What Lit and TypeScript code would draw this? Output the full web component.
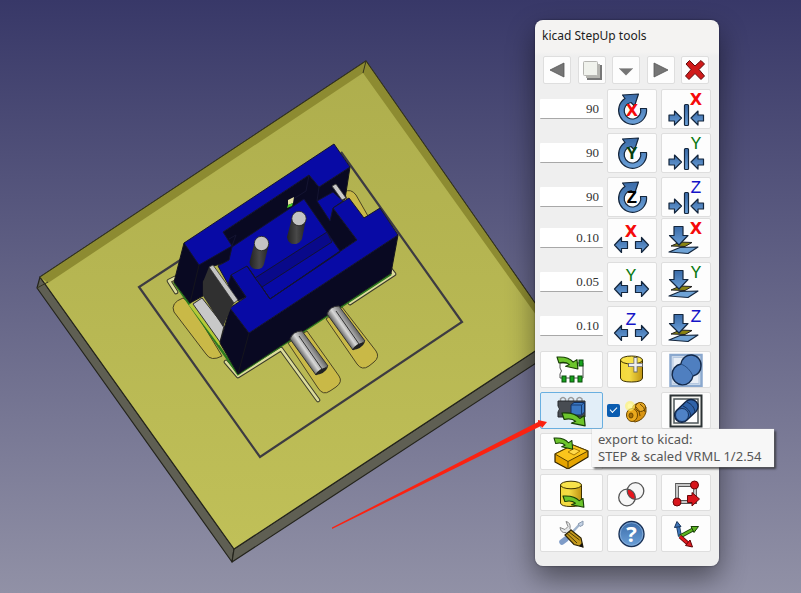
import { LitElement, html, svg, css, type SVGTemplateResult } from "lit";
import { customElement, state } from "lit/decorators.js";

type Axis = "X" | "Y" | "Z";
const AXES: Axis[] = ["X", "Y", "Z"];

const letter = (a: Axis, x: number, y: number, dark = false) => svg`
  <text class="letter ${a.toLowerCase()} ${dark ? "dark" : ""}" x=${x} y=${y} text-anchor="middle">${a}</text>`;

const greenArrow = (t: string) => svg`
  <path transform=${t} d="M0 0Q12-1 17 6L21 3L22 14L9 11L13 9Q9 5 2 7Z"
    fill="#6cc52c" stroke="#173f06" stroke-width="1.2" stroke-linejoin="round"/>`;

const rotateIcon = (a: Axis) => svg`
  <path class="steel" d="M39.500 19.500A14 14 0 1 1 18 9.500L15.500 6L31.500 5L27.500 17L24 13.500A8.300 8.300 0 1 0 33.500 19.500Z"/>
  ${letter(a, 25, a === "X" ? 27 : 26, true)}`;

const mirrorIcon = (a: Axis) => svg`
  <path class="steel" d="M8 26h5.500v-4l7 7l-7 7v-4H8Z"/>
  <rect class="steel" x="23.500" y="15.500" width="4" height="21" rx="1"/>
  <path class="steel" d="M42.500 26h-5.500v-4l-7 7l7 7v-4h5.500Z"/>
  ${letter(a, 35, 16)}`;

const moveIcon = (a: Axis) => svg`
  <path class="steel" d="M7.500 27l7-7.500v4h6v7h-6v4Z"/>
  <path class="steel" d="M41.500 27l-7-7.500v4h-6v7h6v4Z"/>
  ${letter(a, 24, 19)}`;

const dropIcon = (a: Axis) => svg`
  <path d="M10 28L19 24L31 24.500L24 28.500Z" fill="#8a8412" stroke="#222" stroke-width="1"/>
  <path class="steel light" d="M8 34L19 29.500L37 29L27 35.500Z"/>
  <path class="steel" d="M13 8.500h9v9h5L18 27L8.500 17.500H13Z"/>
  ${letter(a, 35, 16)}`;

const icons: Record<string, SVGTemplateResult> = {
  load: svg`
    <path d="M20 12H43V27H20V23Q23 20 20 17Z" fill="#fff" stroke="#555" stroke-width="1"/>
    <g fill="#16a31c" stroke="#0b4d0d"><rect x="39" y="9" width="4" height="6"/>
    <rect x="22" y="25" width="4" height="6"/><rect x="30" y="25" width="4" height="6"/><rect x="38" y="25" width="4" height="6"/></g>
    ${greenArrow("translate(17 6) scale(.95 .85)")}`,
  cylinder: svg`
    <path d="M13.500 9V27Q14 31 24.500 31T35.500 27V9Z" fill="url(#gold)" stroke="#3b3000"/>
    <ellipse cx="24.500" cy="9" rx="11" ry="4" fill="#f8e24a" stroke="#3b3000"/>
    <path d="M28.500 6V21.500M21 14H36" stroke="#666" stroke-width="4"/><path d="M28.500 7V20.500M22 14H35" stroke="#eee" stroke-width="2.400"/>`,
  union: svg`
    <rect x="9.500" y="4" width="31" height="31" fill="#dce6f2" stroke="#8aa8ce" stroke-width="2.500"/>
    <rect x="12" y="6.500" width="26" height="26" fill="#e8eef6" stroke="#b5c8e0"/>
    <path d="M20 13A10 10 0 0 1 40 15A10 10 0 0 1 32 25A10.500 10.500 0 1 1 20 13Z" fill="#4f7fc0" stroke="#13294a" stroke-width="1.400"/>
    <path d="M20 13Q28 16 32 25" fill="none" stroke="#2a5186"/>`,
  exportKicad: svg`
    <g fill="none" stroke="#9a9a9a" stroke-width="1.500"><path d="M20.500 11V7q2.500-3 5 0v4M28.500 11V7q2.500-3 5 0v4M37 11V7q2.500-3 5 0v4"/></g>
    <path d="M18 9H45V25H18V20Q21 17 18 14Z" fill="#484c52" stroke="#25272a"/>
    <path d="M31 13L34 10.500H44.500V20L41.500 23H31Z" fill="#3a77c2" stroke="#122f5c"/><path d="M31 13H41.500V23M41.500 13L44.500 10.500" fill="none" stroke="#183c70"/>
    ${greenArrow("translate(22 21) scale(1.05 .92)")}`,
  fuse: svg`
    <rect x="9.500" y="3.500" width="31" height="31" fill="#f4f4f0" stroke="#2c3335" stroke-width="2"/>
    <rect x="13" y="7" width="24" height="24" fill="#fff" stroke="#4c5558" stroke-width="1.500"/>
    <path d="M15.500 18.500L25 9.500A7 7 0 0 1 35 19.500L26 28A7 7 0 0 1 15.500 18.500Z" fill="#2f62a8" stroke="#0f2344" stroke-width="1.400"/>
    <circle cx="21" cy="23" r="6.500" fill="#4f82c6" stroke="#16325c"/><path d="M22 14Q29 17 30 24M26 10Q33 13 34 20" fill="none" stroke="#16325c"/>`,
  importBox: svg`
    <path d="M15 21L33 12L48 18V24L28 36L15 29Z" fill="#e5a400" stroke="#2f2200" stroke-width="1.200" stroke-linejoin="round"/>
    <path d="M15 21L33 12L48 18L28 28.500Z" fill="#fac51c" stroke="#5a4100"/><path d="M28 28.500V36" stroke="#5a4100"/>
    <path d="M28 19L34 15.500L40 18L34 22Z" fill="#ffd94a" stroke="#a87800"/>
    ${greenArrow("translate(14 5) scale(.85 .8)")}`,
  exportCylinder: svg`
    <path d="M20.500 11V29Q21 32.500 31 32.500T41.500 29V11Z" fill="url(#gold)" stroke="#3b3000"/>
    <ellipse cx="31" cy="11" rx="10.500" ry="3.800" fill="#f8e24a" stroke="#3b3000"/>
    ${greenArrow("translate(23 22) scale(.95 .8)")}`,
  intersect: svg`
    <circle cx="20" cy="23.500" r="8.300" fill="#f6f6f6"/><circle cx="28.500" cy="17" r="8.300" fill="#f6f6f6"/>
    <path d="M20.300 15.300A8.300 8.300 0 0 1 28.200 25.300A8.300 8.300 0 0 1 20.300 15.300Z" fill="#e8141c"/>
    <g fill="none" stroke="#555" stroke-width="1.300"><circle cx="20" cy="23.500" r="8.300"/><circle cx="28.500" cy="17" r="8.300"/></g>`,
  path: svg`
    <path d="M16 28V11H34V28H16" fill="none" stroke="#555" stroke-width="3.800"/><path d="M16 28V11H34V28H16" fill="none" stroke="#c6c6c6" stroke-width="2"/>
    <g fill="#d8161c" stroke="#6b0608"><circle cx="33.500" cy="11" r="4"/><circle cx="16" cy="28" r="4"/>
    <path d="M26.500 21.500H31V18.500L38.500 25L31 32V28.500H26.500Z"/></g>`,
  tools: svg`
    <path d="M41 8L24 26" stroke="#9fb3cc" stroke-width="2.500"/><path d="M43 6l-5 3l2 2.500l3-1.500Z" fill="#c4d2e4" stroke="#8b9bb0"/>
    <path d="M22 27L26 24" stroke="#7f9cc8" stroke-width="5.500" stroke-linecap="round"/>
    <path d="M26 6.500q5 1 4 7l10 11l-4 4l-10-11q-5 1-6-5l5 2l3-3Z" fill="#e5e7e8" stroke="#888"/>
    <path d="M25 20L31 15L41 23L43 32L34 29.500Z" fill="#c59a1c" stroke="#2b2205" stroke-width="1.200"/><path d="M27 18.500L37 28M29 17L39.500 25" stroke="#4a3904"/><path d="M39 31l4 1.500l-1-4.500Z" fill="#111"/>`,
  help: svg`
    <circle cx="24.500" cy="19" r="12.500" fill="url(#steel)" stroke="#1a3257" stroke-width="1.400"/><circle cx="24.500" cy="19" r="11.300" fill="none" stroke="#8db2dd" stroke-width=".8"/>
    <text class="question" x="24.500" y="27" text-anchor="middle">?</text>`,
  axes: svg`
    <path d="M19 21.500L17 11" stroke="#153259" stroke-width="4"/><path d="M19 21.500L17 11" stroke="#3d74b8" stroke-width="2.400"/>
    <path d="M16 6.500L20 11.500L13.500 12.500Z" fill="#3d74b8" stroke="#153259"/>
    <path d="M19 21.500L32 14.500" stroke="#173f06" stroke-width="4"/><path d="M19 21.500L32 14.500" stroke="#5cb320" stroke-width="2.400"/>
    <path d="M37.500 11.500L30 11.500L33 17.500Z" fill="#5cb320" stroke="#173f06"/>
    <path d="M19 21.500L27.500 29" stroke="#5a0507" stroke-width="4"/><path d="M19 21.500L27.500 29" stroke="#e0181e" stroke-width="2.400"/>
    <path d="M31.500 32L24.500 30.500L29 25Z" fill="#e0181e" stroke="#5a0507"/>`,
};

const gear = svg`
  <g stroke="#6b4700" stroke-width="1"><path d="M22 19q6-9 12-8l5 4v5q-2 8-11 10q-6-2-7-6Z" fill="#d99411"/>
  <ellipse cx="33.500" cy="15" rx="5" ry="4.500" fill="#e9ab26"/><ellipse cx="25" cy="23" rx="5.500" ry="6.500" fill="#eaa91c"/>
  <ellipse cx="24" cy="23.500" rx="2" ry="2.500" fill="#a87108"/><path d="M29 15q4 3 4 9M33 12q5 3 5 8" fill="none"/></g>
  <circle cx="23" cy="14" r="5" fill="#fff36b" opacity=".65"/><circle cx="23" cy="14" r="2.500" fill="#fff9a8"/>`;

const toolbar: { label: string; art: SVGTemplateResult }[] = [
  { label: "Previous", art: svg`<path d="M7 14L21 7V21Z" fill="#757575" stroke="#555" stroke-width=".8"/>` },
  { label: "Window", art: svg`<rect x="9" y="9" width="15" height="15" fill="#777"/><rect x="8" y="8" width="14" height="14" fill="#b5b5b0"/><rect x="5.500" y="5.500" width="14" height="14" rx="1" fill="#f0f2ec" stroke="#b6b6b2"/>` },
  { label: "Collapse", art: svg`<path d="M7 12.500H21L14 19.500Z" fill="#757575"/><path d="M7 12.500H21" stroke="#aaa"/>` },
  { label: "Next", art: svg`<path d="M21 14L7 7V21Z" fill="#757575" stroke="#555" stroke-width=".8"/>` },
  { label: "Close", art: svg`<path d="M5 8L8.500 4.500L14 10L20 4.500L23.500 8L18 13.500L23.500 20L20 23.500L14 17.500L8 23.500L4.500 20L10 13.500Z" fill="#d01a1a" stroke="#5f0a0a" stroke-width="1"/>` },
];

const scene = svg`
  <defs>
    <linearGradient id="sky" x1="0" y1="0" x2="0" y2="1"><stop offset="0" stop-color="#383868"/><stop offset="1" stop-color="#9191a6"/></linearGradient>
    <linearGradient id="board" x1="0" y1="0" x2="0" y2="1"><stop offset="0" stop-color="#aeae4d"/><stop offset="1" stop-color="#c0c058"/></linearGradient>
    <linearGradient id="lead" gradientUnits="userSpaceOnUse" x1="302" y1="357" x2="315" y2="348"><stop offset="0" stop-color="#555"/><stop offset=".4" stop-color="#d8d8d8"/><stop offset="1" stop-color="#666"/></linearGradient>
    <linearGradient id="pin" x1="0" x2="1" y1="0" y2="0"><stop offset="0" stop-color="#222"/><stop offset=".5" stop-color="#484848"/><stop offset="1" stop-color="#242424"/></linearGradient>
    <linearGradient id="gold"><stop offset="0" stop-color="#f2d93a"/><stop offset=".4" stop-color="#f4dc45"/><stop offset="1" stop-color="#bf9312"/></linearGradient>
    <linearGradient id="steel" x1="0" y1="0" x2="0" y2="1"><stop offset="0" stop-color="#3a6ba8"/><stop offset="1" stop-color="#6ba0d8"/></linearGradient>
  </defs>
  <rect width="801" height="593" fill="url(#sky)"/>
  <g stroke="#24241c" stroke-width="1.200" stroke-linejoin="round">
    <path d="M40 277L37 288L232 562L234 549Z" fill="#5f5f53"/>
    <path d="M234 549L232 562L556 350L558 336Z" fill="#5f5f53"/>
    <path d="M40 277L366 61L558 336L234 549Z" fill="url(#board)"/>
  </g>
  <path d="M40 277L366 61L558 336L554 340L363 73L48 283Z" fill="#8d8b31"/>
  <path d="M40 277L366 61L558 336M366 61L363 73M37 288L48 282" fill="none" stroke="#35351e"/>
  <path d="M341 152L462 322L260 457L139 287L185 257" fill="none" stroke="#3d3b42" stroke-width="2.200"/>
  <g fill="#c9b947" stroke="#4a4423">
    <path d="M183 298Q170 303 174 312L206 354Q211 362 222 356L190 303Z"/>
    <path d="M288 343L318 388Q323 396 330 391L336 387Q343 382 339 376L307 331Z"/>
    <path d="M326 319L357 364Q362 371 369 366L374 362Q380 357 376 351L342 307Z"/>
    <path d="M344 192Q351 188 356 195L368 216L362 219L347 199Z"/>
  </g>
  <g fill="none" stroke-linecap="round" stroke-linejoin="round">
    <path d="M175 278L169 281L176 292M226 362L238 376L281 349L318 400M350 303L394 274L390 269" stroke="#3a3a2a" stroke-width="4.600"/>
    <path d="M175 278L169 281L176 292M226 362L238 376L281 349L318 400M350 303L394 274L390 269" stroke="#dcdc9b" stroke-width="2.600"/>
  </g>
  <path d="M174 282L238 374L391 274" fill="none" stroke="#2c7a1f" stroke-width="2.400"/>
  <path d="M190 304L220 344" stroke="#b5cb38" stroke-width="3"/>
  <path d="M193 304L202 298L224 326L220 342Z" fill="#c8c8c8" stroke="#333"/>
  <g fill="#090922" stroke="#15151d" stroke-linejoin="round">
    <path d="M184 243L223 232L309 175L319 187L350 167L345 199L333 208L357 240L270 299L229 262L213 266L203 282V296L190 303L174 282Z"/>
    <path d="M230 308L249 333L398 235L391 273L238 374L220 343Z"/>
    <path d="M249 333L238 374M199 265L190 303"/>
  </g>
  <g fill="#080aa5" stroke="#141432" stroke-linejoin="round">
    <path d="M304 199L340 251L270 299L247 266L228 284L218 266L229 260L232 247Z"/>
    <path d="M317 201L333 192L343 201L333 208L330 221Z"/>
    <path d="M334 144L350 167L319 187L309 175L223 232L232 246L199 265L184 243Z"/>
    <path d="M333 208L349 198L364 218L380 208L398 235L249 333L230 308L246 297L231 275L247 266L270 299L357 240Z"/>
    <path d="M327 232L332 242L262 287L255 278Z" fill="#09098a"/>
    <path d="M261 286L270 299L340 252M255 278L247 266" fill="none"/>
    <path d="M231 275L246 297L238 301L228 285Z" fill="#090922"/>
    <path d="M309 175L306 191L290 201M232 246L236 235L229 239M319 187L317 201" fill="none"/>
  </g>
  <path d="M209 267L203 282V296L223 327L231 308L235 302Z" fill="#303030"/>
  <path d="M209 267L213 265L238 300L234 303Z" fill="#c4c4c4" stroke="#333" stroke-width=".8"/>
  <path d="M332 187L343 201V196L335 184Z" fill="#383838"/>
  <path d="M332 186L336 184L346 198L342 200Z" fill="#cacaca" stroke="#333" stroke-width=".8"/>
  <path d="M288 200L294 197L293 203L288 205Z" fill="#e5e0a5"/><path d="M288 205L293 203L292 206L287 208Z" fill="#45cb25"/>
  <path d="M254.500 243L249.500 262Q250 270 259 269Q263 268 264 264L269 244Z" fill="url(#pin)"/>
  <path d="M292 218L287 237Q288 245 296 244Q300 243 302 239L306 219Z" fill="url(#pin)"/>
  <g fill="#c3c3c3" stroke="#222" stroke-width=".8"><circle cx="261.500" cy="243.500" r="7.200"/><circle cx="299" cy="218.500" r="7.200"/></g>
  <path d="M290 339Q293 331 302 331L328 366L316 375Z" fill="url(#lead)" stroke="#333"/>
  <path d="M315 375Q319 368 328 367Q325 374 315 375Z" fill="#222"/>
  <path d="M299 336L322 369" stroke="#333"/>
  <g transform="translate(37 -25)"><path d="M290 339Q293 331 302 331L328 366L316 375Z" fill="url(#lead)" stroke="#333"/>
  <path d="M315 375Q319 368 328 367Q325 374 315 375Z" fill="#222"/><path d="M299 336L322 369" stroke="#333"/></g>`;

@customElement("app-root")
export class AppRoot extends LitElement {
  @state() private angles = ["90", "90", "90"];
  @state() private offsets = ["0.10", "0.05", "0.10"];

  static styles = css`
    :host {
      display: block;
      position: relative;
      min-height: 100vh;
      overflow: hidden;
      background: #707090;
      font-family: "Noto Sans", "Open Sans", sans-serif;
    }
    .layer { position: absolute; inset: 0; width: 100%; height: 100%; }
    .arrow { pointer-events: none; }
    .panel {
      position: absolute;
      top: 20px;
      right: 82px;
      width: 184px;
      box-sizing: border-box;
      padding: 0 8px 14px 5px;
      border-radius: 8px;
      background: linear-gradient(#f4f3f2 0 32px, #efefef 36px);
      box-shadow: 0 0 2px rgba(0, 0, 0, 0.5), 0 12px 28px rgba(0, 0, 0, 0.45);
    }
    h1 {
      margin: 0;
      padding: 0 2px;
      font-size: 12px;
      font-weight: 400;
      line-height: 32px;
      color: #1c1c1c;
    }
    .toolbar {
      display: flex;
      justify-content: space-between;
      padding: 4px 2px 5px 3px;
    }
    .grid {
      display: grid;
      grid-template-columns: 1fr 50px 50px;
      gap: 4px;
      grid-auto-rows: 40px;
      align-items: center;
      margin-bottom: 1px;
    }
    .actions { grid-auto-rows: 37px; margin: 5px 0 0; }
    button {
      display: block;
      box-sizing: border-box;
      width: 100%;
      height: 100%;
      padding: 0;
      border: 1px solid #dedede;
      border-radius: 2px;
      background: #fdfdfd;
    }
    .toolbar button { width: 28px; height: 28px; }
    button.hot { border-color: #69afe0; background: #e2eef8; }
    button svg, .option svg { display: block; width: 100%; height: 100%; }
    .value {
      box-sizing: border-box;
      width: 100%;
      height: 20px;
      padding: 0 4px;
      border: 0;
      border-bottom: 1px solid #a8a8a8;
      border-radius: 1px;
      background: #fff;
      color: #333;
      font: 13px "Liberation Serif", serif;
      text-align: right;
    }
    .cell { position: relative; height: 100%; }
    .option { position: relative; display: block; height: 100%; }
    .option input {
      position: absolute;
      left: 0;
      top: 12px;
      width: 13px;
      height: 13px;
      margin: 0;
      appearance: none;
      border-radius: 2px;
      background: #0a5cb0;
    }
    .option input:checked::before {
      content: "";
      position: absolute;
      left: 3px;
      top: 3px;
      width: 6px;
      height: 3px;
      border: solid #fff;
      border-width: 0 0 1px 1px;
      transform: rotate(-45deg);
    }
    .tip {
      position: absolute;
      z-index: 2;
      left: 52px;
      top: 100%;
      padding: 2px 12px 2px 6px;
      background: #f7f7f7;
      box-shadow: 0 0 1px #aaa, 2px 2px 2px rgba(40, 40, 40, 0.75);
      color: #565656;
      font-size: 13px;
      line-height: 17px;
      white-space: nowrap;
    }
    .steel { fill: url(#steel) #4a82bf; stroke: #14263d; stroke-width: 1.2; stroke-linejoin: round; }
    .light { fill: #6fa3d6; }
    .letter { font: 18px "Liberation Mono", monospace; }
    .x { fill: #f50a0a; font: bold 16px "DejaVu Sans", sans-serif; }
    .y { fill: #0b7a14; }
    .z { fill: #1414c8; }
    .dark.y { fill: #06420c; font-weight: bold; }
    .dark.z { fill: #000; font-weight: bold; }
    .question { fill: #fff; font: bold 22px "Open Sans", sans-serif; }
  `;

  private tile(label: string, art: unknown, box: string, cls = "") {
    return html`<button class=${cls} type="button" aria-label=${label}><svg viewBox=${box} aria-hidden="true">${art}</svg></button>`;
  }

  private field(label: string, value: string) {
    return html`<input class="value" type="text" aria-label=${label} .value=${value} />`;
  }

  render() {
    const std = "1 1 48 38";
    const wide = "1 1 61 35";
    const low = "1 1 48 35";
    return html`
      <svg class="layer" viewBox="0 0 801 593" preserveAspectRatio="xMidYMid slice" role="img" aria-label="3D view of connector on board">${scene}</svg>
      <section class="panel" aria-label="kicad StepUp tools">
        <h1>kicad StepUp tools</h1>
        <div class="toolbar">${toolbar.map((t) => this.tile(t.label, t.art, "1 1 26 26"))}</div>
        <div class="grid">
          ${AXES.map((a, i) => html`
            ${this.field(`Angle ${a}`, this.angles[i])}
            ${this.tile(`Rotate ${a}`, rotateIcon(a), std)}
            ${this.tile(`Mirror ${a}`, mirrorIcon(a), std)}`)}
        </div>
        <div class="grid">
          ${AXES.map((a, i) => html`
            ${this.field(`Offset ${a}`, this.offsets[i])}
            ${this.tile(`Move ${a}`, moveIcon(a), std)}
            ${this.tile(`Drop ${a}`, dropIcon(a), std)}`)}
        </div>
        <div class="grid actions">
          ${this.tile("Load board", icons.load, wide)}
          ${this.tile("Add part", icons.cylinder, low)}
          ${this.tile("Union", icons.union, low)}
          <div class="cell">
            ${this.tile("Export to kicad", icons.exportKicad, wide, "hot")}
            <div class="tip" role="tooltip">export to kicad:<br />STEP &amp; scaled VRML 1/2.54</div>
          </div>
          <label class="option">
            <input type="checkbox" aria-label="Materials" checked />
            <svg viewBox="0 0 50 37" aria-hidden="true">${gear}</svg>
          </label>
          ${this.tile("Fuse", icons.fuse, low)}
          ${this.tile("Import box", icons.importBox, wide)}
          <span></span><span></span>
          ${this.tile("Export part", icons.exportCylinder, wide)}
          ${this.tile("Check collisions", icons.intersect, low)}
          ${this.tile("Push sketch", icons.path, low)}
          ${this.tile("Settings", icons.tools, wide)}
          ${this.tile("Help", icons.help, low)}
          ${this.tile("Axes", icons.axes, low)}
        </div>
      </section>
      <svg class="layer arrow" viewBox="0 0 801 593" preserveAspectRatio="xMidYMid slice" aria-hidden="true">
        <path d="M332 527.500L538 422L538 420L547 422L542 428L541 426L332 529Z" fill="#fb2211"/>
      </svg>`;
  }
}
